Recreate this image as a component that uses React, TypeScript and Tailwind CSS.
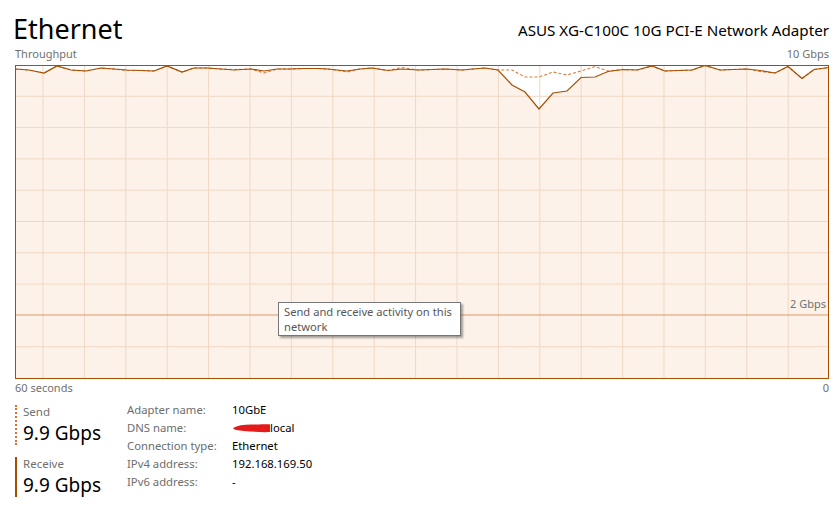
import React from "react";

const W = 814;
const H = 313;

// points in page coordinates, mapped into the chart box (left 15, top 65)
const receive: [number, number][] = [
  [15, 69], [29, 70], [44, 73], [57, 66], [71, 70], [86, 71], [101, 68], [114, 69],
  [127, 70], [141, 70.5], [154, 71], [167, 66], [182, 72], [194, 68], [207, 68],
  [221, 69], [234, 70], [251, 69], [264, 71], [277, 69], [289, 69], [305, 68.5],
  [318, 68.5], [328, 69], [347, 71], [360, 69], [372, 68], [388, 70.5], [402, 69],
  [418, 70], [432, 69.5], [445, 69], [462, 70], [473, 69], [485, 68], [498, 70],
  [512, 85], [525, 92], [539, 109], [553, 93], [567, 91], [581, 77.5], [595, 77],
  [608, 71.5], [623, 69.5], [637, 70], [652, 66], [665, 71], [678, 70.5], [692, 70],
  [705, 65.5], [720, 70], [733, 69.5], [747, 69], [760, 70.5], [775, 73], [788, 66.5],
  [802, 78.5], [814, 69.5], [829, 67.5],
];

const sendOverrides: Record<number, number> = {
  512: 70, 525: 77, 539: 77, 553: 72, 567: 75, 581: 71, 595: 66.5, 608: 71,
  264: 73, 347: 72, 402: 67.5, 760: 71.5, 127: 70.5, 234: 69.5,
};
const send: [number, number][] = receive.map(([x, y]) => [x, sendOverrides[x] ?? y]);

const toPts = (pts: [number, number][]) =>
  pts.map(([x, y]) => `${(x - 15).toFixed(1)},${(y - 65).toFixed(1)}`).join(" ");

const Chart = () => {
  const vLines: number[] = [];
  for (let x = 28; x < W; x += 41.4) vLines.push(x);
  const hLines = [1, 2, 3, 4, 5, 6, 7, 9].map((k) => k * 31.3);
  const fill = `0,${H} ${toPts(receive)} ${W},${H}`;

  return (
    <svg width={W} height={H + 1} className="block">
      <rect x={0} y={0} width={W} height={H + 1} fill="#ffffff" />
      <polygon points={fill} fill="#fcf2e9" />
      {vLines.map((x) => (
        <line key={x} x1={x} y1={0} x2={x} y2={H} stroke="#f1d8c3" strokeWidth={1} />
      ))}
      {hLines.map((y) => (
        <line key={y} x1={0} y1={y} x2={W} y2={y} stroke="#f1d8c3" strokeWidth={1} />
      ))}
      <line x1={0} y1={250} x2={W} y2={250} stroke="#dd9966" strokeWidth={1} />
      <polyline points={toPts(send)} fill="none" stroke="#dc7a3c" strokeWidth={1.1} strokeDasharray="3 2" />
      <polyline points={toPts(receive)} fill="none" stroke="#a74f01" strokeWidth={1.2} />
      <rect x={0.5} y={0.5} width={W - 1} height={H} fill="none" stroke="#a74f01" strokeWidth={1} />
    </svg>
  );
};

const details = [
  ["Adapter name:", "10GbE"],
  ["DNS name:", "dns"],
  ["Connection type:", "Ethernet"],
  ["IPv4 address:", "192.168.169.50"],
  ["IPv6 address:", "-"],
];

const Stat = ({ label, value, dotted }: { label: string; value: string; dotted?: boolean }) => (
  <div className="flex h-[40px] items-stretch">
    <div
      className={
        dotted
          ? "w-[2px] border-l-2 border-dotted border-[#d8732e]"
          : "w-[2px] bg-[#a74f01]"
      }
    />
    <div className="ml-[6px] flex flex-col">
      <span className="text-[11.5px] leading-[14px] text-[#707070]">{label}</span>
      <span className="mt-[3px] text-[19px] leading-[22px] text-black">{value}</span>
    </div>
  </div>
);

export default function App() {
  return (
    <div className="h-[516px] w-[839px] bg-white pl-[15px] pr-[10px] font-['Noto_Sans',sans-serif]">
      <div className="flex h-[46px] items-end justify-between">
        <span className="ml-[-2px] text-[27px] font-normal leading-[34px] text-black">Ethernet</span>
        <span className="mb-[6px] text-[15.2px] leading-[20px] text-black">
          ASUS XG-C100C 10G PCI-E Network Adapter
        </span>
      </div>
      <div className="flex h-[19px] items-center justify-between pb-[2px] text-[11px] text-[#707070]">
        <span>Throughput</span>
        <span>10 Gbps</span>
      </div>
      <div className="relative h-[314px] w-[814px]">
        <Chart />
        <span className="absolute right-[3px] top-[232px] text-[11px] leading-[14px] text-[#707070]">2 Gbps</span>
        <div className="absolute left-[263px] top-[237px] w-[183px] whitespace-nowrap border border-[#767676] bg-white px-[5px] py-[1px] text-[11.2px] leading-[15px] text-[#575757] shadow-[2px_2px_2px_rgba(0,0,0,0.35)]">
          Send and receive activity on this
          <br />
          network
        </div>
      </div>
      <div className="flex h-[18px] items-center justify-between text-[11px] text-[#707070]">
        <span>60 seconds</span>
        <span>0</span>
      </div>
      <div className="mt-[6px] flex">
        <div className="mt-[2px] flex w-[112px] flex-col gap-[12px]">
          <Stat label="Send" value="9.9 Gbps" dotted />
          <Stat label="Receive" value="9.9 Gbps" />
        </div>
        <div className="-mt-[2px] flex flex-col">
          {details.map(([k, v]) => (
            <div key={k} className="flex h-[18px] items-center text-[11.3px]">
              <span className="w-[105px] text-[#6d6d6d]">{k}</span>
              {v === "dns" ? (
                <span className="flex items-center text-black">
                  <svg width="38" height="10">
                    <path d="M1 5 C 6 2, 14 1, 24 1.5 C 30 1.5, 35 1, 38 1.5 L 38 9 C 30 9.5, 20 8.5, 12 8 C 6 7.5, 2 7, 1 5 Z" fill="#e31b1b" />
                  </svg>
                  local
                </span>
              ) : (
                <span className="text-black">{v}</span>
              )}
            </div>
          ))}
        </div>
      </div>
    </div>
  );
}
